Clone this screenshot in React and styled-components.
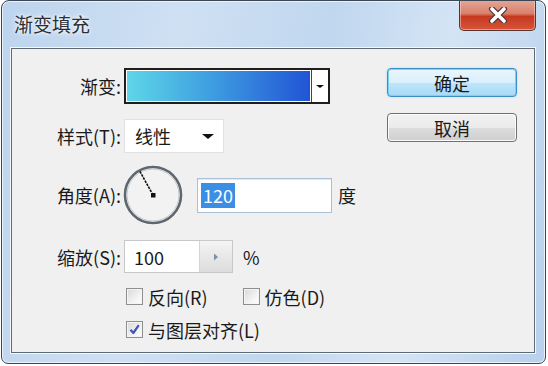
import React from 'react';
import styled, { createGlobalStyle } from 'styled-components';

const GlobalStyle = createGlobalStyle`
  html, body {
    margin: 0;
    padding: 0;
    background: #ffffff;
  }
  body {
    font-family: "Noto Sans CJK SC", "Noto Sans", sans-serif;
  }
`;

const FONT = '"Noto Sans CJK SC", "Noto Sans", sans-serif';

const App = () => {
  return (
    <>
      <GlobalStyle />
      <Stage>
        <Window>
          <TitleBar>
            <Title>渐变填充</Title>
            <CloseButton>
              <svg width="20" height="16" viewBox="0 0 20 16">
                <path
                  d="M4 2 L16 14 M16 2 L4 14"
                  stroke="#4a3a38"
                  strokeWidth="6"
                  strokeLinecap="round"
                />
                <path
                  d="M4 2 L16 14 M16 2 L4 14"
                  stroke="#ffffff"
                  strokeWidth="3.6"
                  strokeLinecap="round"
                />
              </svg>
            </CloseButton>
          </TitleBar>

          <Client>
            <Form>
              <Row gap={19}>
                <Label>渐变:</Label>
                <GradientPicker>
                  <GradientSwatch />
                  <SwatchArrow>
                    <Caret size={4} />
                  </SwatchArrow>
                </GradientPicker>
              </Row>

              <Row gap={15}>
                <Label>样式(T):</Label>
                <Select>
                  <span>线性</span>
                  <Caret size={6} />
                </Select>
              </Row>

              <Row gap={12}>
                <Label>角度(A):</Label>
                <Dial>
                  <svg width="60" height="60" viewBox="0 0 60 60">
                    <circle cx="30" cy="30" r="28" fill="#f2f2f2" stroke="#5f666d" strokeWidth="2.6" />
                    <circle cx="30" cy="30" r="26" fill="none" stroke="#c3c8ce" strokeWidth="1" />
                    <line
                      x1="30"
                      y1="30"
                      x2="16.8"
                      y2="6.2"
                      stroke="#111"
                      strokeWidth="1.6"
                      strokeDasharray="2.5 1"
                    />
                    <rect x="28" y="28" width="4.5" height="4.5" fill="#111" />
                  </svg>
                </Dial>
                <AngleInput>
                  <Selected>120</Selected>
                </AngleInput>
                <Unit>度</Unit>
              </Row>

              <Row gap={15}>
                <Label>缩放(S):</Label>
                <ScaleBox>
                  <ScaleValue>100</ScaleValue>
                  <Spinner>
                    <svg width="6" height="8" viewBox="0 0 6 8">
                      <path d="M1 0.5 L5 4 L1 7.5 Z" fill="#7d8ea6" />
                    </svg>
                  </Spinner>
                </ScaleBox>
                <Unit left={10}>%</Unit>
              </Row>

              <CheckRow gap={15}>
                <Check>
                  <Box />
                  反向(R)
                </Check>
                <Check>
                  <Box />
                  仿色(D)
                </Check>
              </CheckRow>

              <CheckRow gap={16}>
                <Check>
                  <Box checked>
                    <svg width="13" height="13" viewBox="0 0 13 13">
                      <path
                        d="M2.5 6.8 L5.3 10 L10.8 2.2"
                        fill="none"
                        stroke="#3f57b8"
                        strokeWidth="2.2"
                        strokeLinejoin="round"
                      />
                    </svg>
                  </Box>
                  与图层对齐(L)
                </Check>
              </CheckRow>
            </Form>

            <Buttons>
              <Button primary>确定</Button>
              <Button>取消</Button>
            </Buttons>
          </Client>
        </Window>
      </Stage>
    </>
  );
};

const Stage = styled.div`
  width: 548px;
  height: 366px;
  padding: 0 2px 2px 1px;
  box-sizing: border-box;
  background: #ffffff;
`;

const Window = styled.div`
  width: 100%;
  height: 100%;
  box-sizing: border-box;
  display: flex;
  flex-direction: column;
  border: 1px solid #3c4753;
  border-radius: 8px 8px 7px 7px;
  background: linear-gradient(
    100deg,
    #bcd4ee 0%,
    #cfe0f3 30%,
    #c0d7ef 55%,
    #d4e4f5 75%,
    #b8d0ec 100%
  );
  box-shadow: inset 0 0 0 1px #eaf2fb;
  padding: 0 10px 10px 9px;
  overflow: hidden;
`;

const TitleBar = styled.div`
  height: 47px;
  display: flex;
  justify-content: space-between;
  align-items: flex-start;
  flex-shrink: 0;
`;

const Title = styled.div`
  margin-top: 10px;
  margin-left: 3px;
  font-family: ${FONT};
  font-size: 19px;
  line-height: 26px;
  color: #2b2f33;
  text-shadow: 0 0 6px #ffffff, 0 0 3px #ffffff;
`;

const CloseButton = styled.div`
  width: 77px;
  height: 31px;
  margin-top: -1px;
  margin-right: -1px;
  box-sizing: border-box;
  display: flex;
  align-items: center;
  justify-content: center;
  border: 1px solid #5a3530;
  border-top: none;
  border-radius: 0 0 5px 5px;
  background: linear-gradient(
    to bottom,
    #e5a898 0%,
    #d8806c 45%,
    #c6391f 55%,
    #d8543a 100%
  );
  box-shadow: inset 0 0 0 1px rgba(255, 220, 210, 0.5);
`;

const Client = styled.div`
  flex: 1;
  display: grid;
  grid-template-columns: 1fr 130px;
  padding: 0 17px 0 0;
  background: #f0f0f0;
  border: 1px solid #5e6a76;
  box-shadow: 0 0 0 1px #f4f8fc;
`;

const Form = styled.div`
  display: flex;
  flex-direction: column;
`;

const Row = styled.div`
  display: flex;
  align-items: center;
  margin-top: ${(p) => p.gap}px;
`;

const Label = styled.div`
  width: 109px;
  margin-right: 3px;
  text-align: right;
  font-family: ${FONT};
  font-size: 18px;
  color: #1a1a1a;
  white-space: nowrap;
`;

const GradientPicker = styled.div`
  width: 206px;
  height: 36px;
  box-sizing: border-box;
  display: flex;
  border: 2px solid #1e1e1e;
  background: #ffffff;
`;

const GradientSwatch = styled.div`
  flex: 1;
  border: 1px solid #ffffff;
  background: linear-gradient(to right, #5ed6e8 0%, #3f9fe0 45%, #2154d6 100%);
`;

const SwatchArrow = styled.div`
  width: 16px;
  display: flex;
  align-items: center;
  justify-content: center;
  border-left: 1px solid #444;
  background: #ffffff;
`;

const Caret = styled.span`
  width: 0;
  height: 0;
  border-left: ${(p) => p.size}px solid transparent;
  border-right: ${(p) => p.size}px solid transparent;
  border-top: ${(p) => Math.round(p.size * 0.85)}px solid #111;
`;

const Select = styled.div`
  width: 100px;
  height: 34px;
  box-sizing: border-box;
  display: flex;
  align-items: center;
  justify-content: space-between;
  padding: 0 9px 0 10px;
  background: #ffffff;
  border: 1px solid #e2e2e2;
  font-family: ${FONT};
  font-size: 18px;
  color: #1a1a1a;
`;

const Dial = styled.div`
  width: 60px;
  height: 60px;
  margin-left: -1px;
  display: flex;
`;

const AngleInput = styled.div`
  width: 135px;
  height: 35px;
  box-sizing: border-box;
  margin-left: 14px;
  display: flex;
  align-items: center;
  padding-left: 3px;
  background: #ffffff;
  border: 1px solid #a9c0d6;
  box-shadow: inset 0 1px 1px #dfe8f1;
`;

const Selected = styled.span`
  display: inline-block;
  padding: 0 2px 0 2px;
  height: 25px;
  line-height: 25px;
  background: #3a8ee6;
  color: #ffffff;
  font-family: ${FONT};
  font-size: 18px;
`;

const Unit = styled.span`
  margin-left: ${(p) => p.left || 6}px;
  font-family: ${FONT};
  font-size: 18px;
  color: #1a1a1a;
`;

const ScaleBox = styled.div`
  width: 109px;
  height: 33px;
  box-sizing: border-box;
  display: flex;
  border: 1px solid #c8c8c8;
  background: #ffffff;
`;

const ScaleValue = styled.div`
  flex: 1;
  display: flex;
  align-items: center;
  padding-left: 9px;
  font-family: ${FONT};
  font-size: 18px;
  color: #1a1a1a;
`;

const Spinner = styled.div`
  width: 32px;
  display: flex;
  align-items: center;
  justify-content: center;
  border-left: 1px solid #d4d4d4;
  background: linear-gradient(to bottom, #f4f4f4, #dcdcdc);
`;

const CheckRow = styled.div`
  display: flex;
  align-items: center;
  gap: 35px;
  padding-left: 114px;
  margin-top: ${(p) => p.gap}px;
`;

const Check = styled.label`
  display: flex;
  align-items: center;
  gap: 5px;
  height: 17px;
  font-family: ${FONT};
  font-size: 18px;
  color: #1a1a1a;
  white-space: nowrap;
`;

const Box = styled.span`
  width: 17px;
  height: 17px;
  box-sizing: border-box;
  display: flex;
  align-items: center;
  justify-content: center;
  border: 1px solid #8e8f8f;
  background: linear-gradient(135deg, #d8d8d8 0%, #f2f2f2 60%, #ffffff 100%);
  box-shadow: inset 0 0 0 1px #f4f4f4;
`;

const Buttons = styled.div`
  display: flex;
  flex-direction: column;
  gap: 16px;
  padding-top: 19px;
`;

const Button = styled.div`
  height: 29px;
  box-sizing: border-box;
  display: flex;
  align-items: center;
  justify-content: center;
  border-radius: 4px;
  border: 1px solid ${(p) => (p.primary ? '#3c8fc4' : '#707070')};
  background: ${(p) =>
    p.primary
      ? 'linear-gradient(to bottom, #eaf6fd 0%, #d9f0fc 50%, #bee6fd 51%, #a7d9f5 100%)'
      : 'linear-gradient(to bottom, #f2f2f2 0%, #ebebeb 50%, #dddddd 51%, #cfcfcf 100%)'};
  box-shadow: ${(p) =>
    p.primary ? 'inset 0 0 0 1px #7fd0f5, 0 0 2px #9fd8f5' : 'inset 0 0 0 1px #fbfbfb'};
  font-family: ${FONT};
  font-size: 18px;
  color: #1a1a1a;
`;

export default App;
